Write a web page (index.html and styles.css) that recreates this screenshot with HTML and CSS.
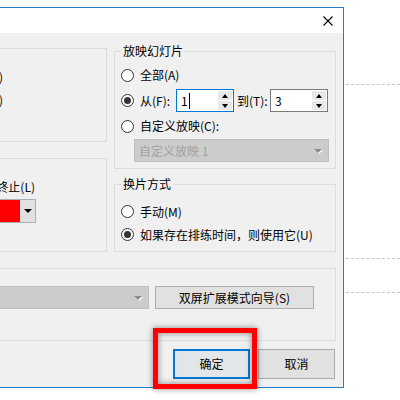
FILE: index.html
```html
<!DOCTYPE html>
<html lang="zh-CN">
<head>
    <meta charset="UTF-8">
    <meta name="viewport" content="width=device-width, initial-scale=1.0">
    <title>设置放映方式</title>
    <link rel="stylesheet" href="styles.css">
</head>
<body>
    <!-- slide placeholders behind the dialog -->
    <div class="slide">
        <div class="guide guide-1"></div>
        <div class="guide guide-2"></div>
        <div class="guide guide-3"></div>
    </div>

    <div class="dialog">
        <div class="titlebar">
            <span class="title">设置放映方式</span>
            <svg class="close" width="10" height="10" viewBox="0 0 10 10">
                <path d="M0.5 0.5 L9.5 9.5 M9.5 0.5 L0.5 9.5" stroke="#000" stroke-width="1.1" fill="none"/>
            </svg>
        </div>

        <div class="dialog-body">
            <div class="columns">
                <div class="col-left">
                    <fieldset class="group group-type">
                        <legend>放映类型</legend>
                        <div class="row row-right">
                            <input type="radio" name="type" checked>
                            <label>演讲者放映(全屏幕)(P)</label>
                        </div>
                        <div class="row row-right">
                            <input type="radio" name="type">
                            <label>观众自行浏览(窗口)(B)</label>
                        </div>
                    </fieldset>

                    <fieldset class="group group-options">
                        <legend>放映选项</legend>
                        <div class="row row-loop">
                            <label>循环放映，按 ESC 键终止(L)</label>
                        </div>
                        <div class="row row-pen">
                            <div class="color-combo">
                                <span class="swatch"></span>
                                <span class="combo-btn"><span class="arrow"></span></span>
                            </div>
                        </div>
                    </fieldset>
                </div>

                <div class="col-right">
                    <fieldset class="group group-slides">
                        <legend>放映幻灯片</legend>
                        <div class="row row-all">
                            <input type="radio" name="range">
                            <label>全部(A)</label>
                        </div>
                        <div class="row row-from">
                            <input type="radio" name="range" checked>
                            <label class="spin-label">从(F):</label>
                            <div class="spin focus">
                                <span class="spin-value">1<span class="caret"></span></span>
                                <span class="spin-btns">
                                    <span class="spin-btn"><span class="up"></span></span>
                                    <span class="spin-btn"><span class="down"></span></span>
                                </span>
                            </div>
                            <label class="spin-label to">到(T):</label>
                            <div class="spin">
                                <span class="spin-value">3</span>
                                <span class="spin-btns">
                                    <span class="spin-btn"><span class="up"></span></span>
                                    <span class="spin-btn"><span class="down"></span></span>
                                </span>
                            </div>
                        </div>
                        <div class="row row-custom">
                            <input type="radio" name="range">
                            <label>自定义放映(C):</label>
                        </div>
                        <div class="combo disabled custom-combo">
                            <span class="combo-text">自定义放映 1</span>
                            <span class="arrow gray"></span>
                        </div>
                    </fieldset>

                    <fieldset class="group group-advance">
                        <legend>换片方式</legend>
                        <div class="row">
                            <input type="radio" name="advance">
                            <label>手动(M)</label>
                        </div>
                        <div class="row">
                            <input type="radio" name="advance" checked>
                            <label>如果存在排练时间，则使用它(U)</label>
                        </div>
                    </fieldset>
                </div>
            </div>

            <fieldset class="group group-monitor">
                <legend>多显示器</legend>
                <div class="monitor-row">
                    <label class="monitor-label">幻灯片放映显示于:</label>
                    <div class="combo disabled monitor-combo">
                        <span class="combo-text"></span>
                        <span class="arrow gray"></span>
                    </div>
                    <button class="btn wizard">双屏扩展模式向导(S)</button>
                </div>
            </fieldset>

            <div class="actions">
                <div class="ok-wrap">
                    <button class="btn ok">确定</button>
                    <div class="highlight"></div>
                </div>
                <button class="btn">取消</button>
            </div>
        </div>
    </div>
</body>
</html>
```

FILE: styles.css
```css
/* General Reset */
* {
    margin: 0;
    padding: 0;
    box-sizing: border-box;
}

body {
    width: 400px;
    height: 400px;
    overflow: hidden;
    position: relative;
    background: #fff;
    font-family: "Noto Sans CJK SC", sans-serif;
    font-size: 12px;
    line-height: 16px;
    color: #000;
}

/* Slide behind */
.slide {
    position: absolute;
    inset: 0;
}

.guide {
    position: absolute;
    left: 300px;
    right: 0;
    border-top: 1px dashed #c6c6c6;
}

.guide-1 { top: 84px; }
.guide-2 { top: 258px; }
.guide-3 { top: 292px; }

/* Dialog */
.dialog {
    position: relative;
    width: 476px;
    margin: 7px 0 0 -132px;
    border: 1px solid #2a7bc6;
    background: #f0f0f0;
}

.titlebar {
    height: 25px;
    background: #fff;
    display: flex;
    align-items: center;
    justify-content: space-between;
    padding: 0 10px 0 8px;
}

.close {
    display: block;
}

.dialog-body {
    padding: 7px 7px 8px 8px;
}

.columns {
    display: flex;
    align-items: flex-start;
    gap: 7px;
}

.col-left {
    width: 230px;
}

.col-right {
    flex: 1;
    margin-top: 3px;
}

/* Group boxes */
.group {
    border: 1px solid #dcdcdc;
    padding: 0 6px;
    min-width: 0;
}

.group legend {
    padding: 0 2px;
    line-height: 16px;
}

.row {
    display: flex;
    align-items: center;
    gap: 6px;
    height: 23px;
    white-space: nowrap;
}

/* Radios */
input[type="radio"] {
    appearance: none;
    width: 13px;
    height: 13px;
    border: 1px solid #333;
    border-radius: 50%;
    background: #fff;
    flex: none;
    position: relative;
}

input[type="radio"]:checked::after {
    content: "";
    position: absolute;
    left: 2px;
    top: 2px;
    width: 7px;
    height: 7px;
    border-radius: 50%;
    background: #333;
}

/* Left column */
.group-type {
    padding-top: 9px;
    padding-bottom: 30px;
    padding-right: 103px;
}

.row-right {
    justify-content: flex-end;
}

.group-options {
    margin-top: 8px;
    padding-top: 9px;
    padding-bottom: 28px;
}

.row-loop {
    justify-content: flex-end;
    padding-right: 65px;
}

.row-pen {
    justify-content: flex-end;
    height: 24px;
    margin-top: 1px;
    padding-right: 64px;
}

.color-combo {
    width: 70px;
    height: 24px;
    border: 1px solid #adadad;
    background: #e1e1e1;
    display: flex;
}

.swatch {
    flex: 1;
    background: #f00;
}

.combo-btn {
    width: 15px;
    display: flex;
    align-items: center;
    justify-content: center;
}

.arrow {
    width: 0;
    height: 0;
    border-left: 4px solid transparent;
    border-right: 4px solid transparent;
    border-top: 4px solid #000;
}

.arrow.gray {
    border-top-color: #8a8a8a;
    filter: drop-shadow(1px 1px 0 #fff);
}

/* Right column */
.group-slides {
    padding-top: 4px;
    padding-bottom: 6px;
}

.row-all {
    height: 24px;
}

.row-from {
    height: 23px;
    margin-top: 2px;
    gap: 0;
}

.row-from input {
    margin-right: 6px;
}

.spin-label {
    width: 36px;
}

.spin-label.to {
    padding-left: 3px;
}

.spin {
    width: 58px;
    height: 23px;
    border: 1px solid #7a7a7a;
    background: #fff;
    display: flex;
}

.spin.focus {
    border-color: #0078d7;
}

.spin-value {
    flex: 1;
    padding-left: 4px;
    line-height: 21px;
    display: flex;
    align-items: center;
}

.caret {
    display: inline-block;
    width: 1px;
    height: 16px;
    margin-left: 1px;
    background: #000;
}

.spin-btns {
    width: 15px;
    display: flex;
    flex-direction: column;
    gap: 1px;
    padding: 1px 1px 1px 0;
}

.spin-btn {
    flex: 1;
    background: #e8e8e8;
    display: flex;
    align-items: center;
    justify-content: center;
}

.spin-btn .up,
.spin-btn .down {
    width: 0;
    height: 0;
    border-left: 3px solid transparent;
    border-right: 3px solid transparent;
}

.spin-btn .up {
    border-bottom: 4px solid #000;
}

.spin-btn .down {
    border-top: 4px solid #000;
}

.row-custom {
    height: 24px;
    margin-top: 2px;
}

.combo {
    height: 23px;
    display: flex;
    align-items: center;
    padding: 0 6px 0 4px;
}

.combo.disabled {
    background: #cccccc;
    border: 1px solid #bfbfbf;
    color: #a2a2a2;
}

.combo-text {
    flex: 1;
}

.custom-combo {
    width: 195px;
    margin: 1px 0 0 13px;
}

.group-advance {
    margin-top: 7px;
    padding-top: 8px;
    padding-bottom: 5px;
}

/* Monitor group */
.group-monitor {
    margin-top: 8px;
    padding: 10px 21px 31px 6px;
}

.monitor-row {
    display: flex;
    align-items: center;
    gap: 6px;
    height: 23px;
}

.monitor-label {
    width: 108px;
    white-space: nowrap;
    overflow: hidden;
}

.monitor-combo {
    flex: 1;
}

/* Buttons */
.btn {
    font: inherit;
    color: #000;
    background: #e1e1e1;
    border: 1px solid #adadad;
}

.wizard {
    width: 159px;
    height: 23px;
}

.actions {
    display: flex;
    justify-content: flex-end;
    gap: 8px;
    margin-top: 8px;
    padding-right: 1px;
}

.actions .btn {
    width: 77px;
    height: 30px;
}

.actions .ok {
    border: 2px solid #0078d7;
    background: #e3e6e9;
}

.ok-wrap {
    position: relative;
}

.highlight {
    position: absolute;
    left: -20px;
    top: -21px;
    width: 104px;
    height: 61px;
    border: 5px solid #f00;
    box-shadow: 0 0 6px rgba(0, 0, 0, 0.45), inset 0 0 6px rgba(0, 0, 0, 0.45);
}
```
